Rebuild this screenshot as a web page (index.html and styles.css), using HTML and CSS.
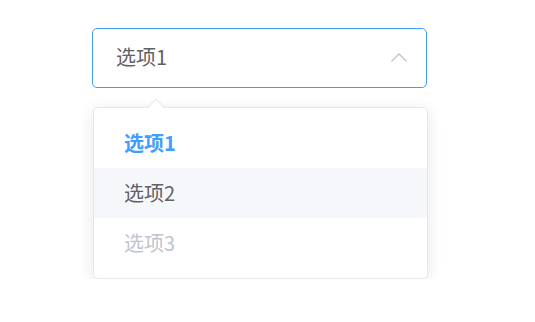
FILE: index.html
```html
<!DOCTYPE html>
<html lang="zh">
<head>
  <meta charset="UTF-8"/>
  <title>选择器</title>
  <link rel="stylesheet" href="styles.css">
</head>
<body>
  <div class="select">
    <div class="select-input">
      <span class="select-value">选项1</span>
      <svg class="select-arrow" width="18" height="12" viewBox="0 0 18 12">
        <path d="M1.5 10.5 L9 3 L16.5 10.5" fill="none" stroke="#c0c4cc" stroke-width="1.3"/>
      </svg>
    </div>

    <!-- options popup -->
    <div class="options">
      <div class="options-arrow"></div>
      <ul class="options-list">
        <li class="item selected">选项1</li>
        <li class="item hover">选项2</li>
        <li class="item disabled">选项3</li>
      </ul>
    </div>
  </div>
</body>
</html>
```

FILE: styles.css
```css
body {
  margin: 0;
  padding: 28px 0 0 92px;
  background: #fff;
  font-family: "Noto Sans CJK SC", "Noto Sans", sans-serif;
}
.select {
  width: 335px;
}
.select-input {
  box-sizing: border-box;
  height: 60px;
  border: 1px solid #409eff;
  border-radius: 5px;
  display: flex;
  align-items: center;
  justify-content: space-between;
  padding: 0 18px 0 23px;
}
.select-value {
  font-size: 20px;
  line-height: 24px;
  color: #606266;
  margin-top: -3px;
}
.select-arrow {
  display: block;
  margin-top: -2px;
}
.options {
  position: relative;
  margin: 19px 0 0 1px;
  width: 335px;
  box-sizing: border-box;
  background: #fff;
  border: 1px solid #e4e7ed;
  border-radius: 5px;
  box-shadow: 0 3px 16px rgba(0,0,0,0.1);
}
.options-arrow {
  position: absolute;
  top: -7px;
  left: 56px;
  width: 11px;
  height: 11px;
  background: #fff;
  border-top: 1px solid #e4e7ed;
  border-left: 1px solid #e4e7ed;
  transform: rotate(45deg);
}
.options-list {
  position: relative;
  list-style: none;
  margin: 0;
  padding: 10px 0;
}
.item {
  height: 50px;
  line-height: 49px;
  padding: 0 30px;
  font-size: 20px;
  color: #606266;
}
.item.selected {
  color: #409eff;
  font-weight: bold;
}
.item.hover {
  background: #f5f7fa;
}
.item.disabled {
  color: #c0c4cc;
}
```
